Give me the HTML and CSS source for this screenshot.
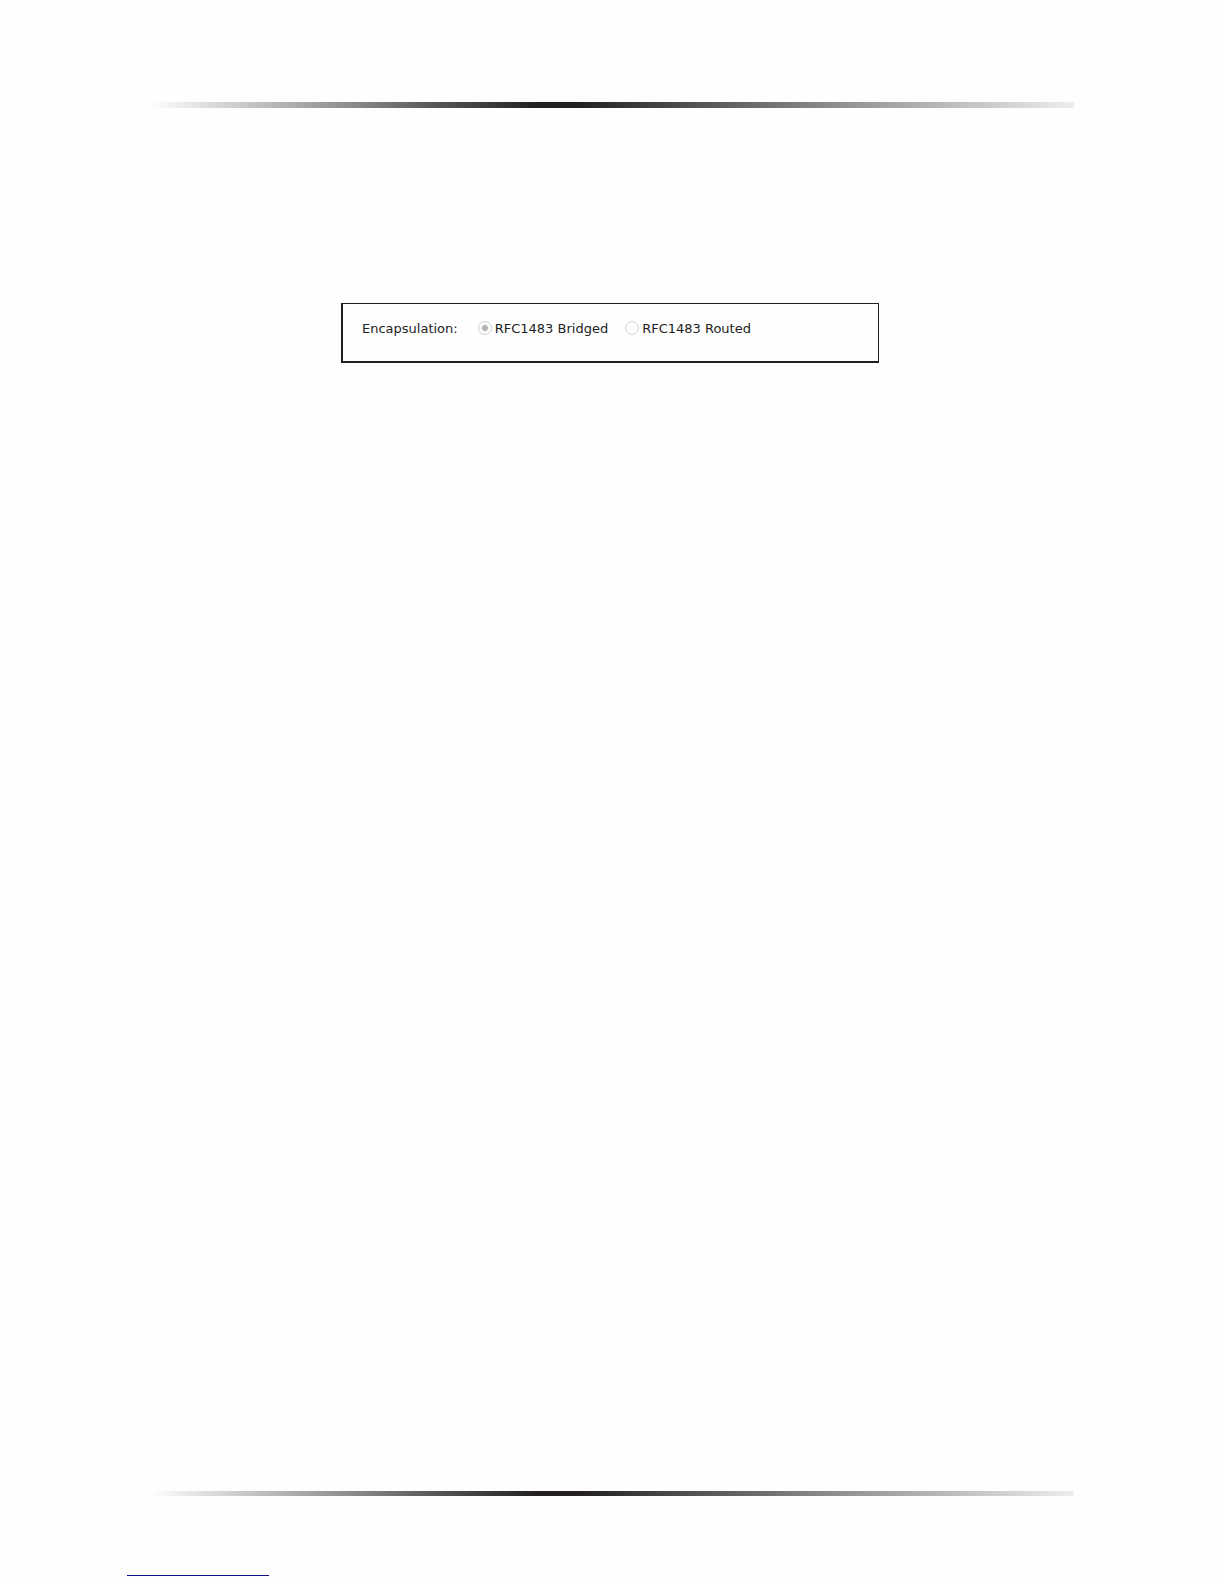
FILE: index.html
```
<!DOCTYPE html>
<html lang="en">
<head>
    <meta charset="UTF-8">
    <meta name="viewport" content="width=device-width, initial-scale=1.0">
    <title>Encapsulation</title>
    <link rel="stylesheet" href="styles.css">
</head>
<body>
    <div class="page">
        <hr class="rule">
        <form class="panel">
            <span class="caption" id="encapsulation">Encapsulation:</span>
            <div class="options" role="radiogroup" aria-labelledby="encapsulation">
                <label class="option">
                    <input type="radio" name="encapsulation" value="bridged" checked>
                    RFC1483 Bridged
                </label>
                <label class="option">
                    <input type="radio" name="encapsulation" value="routed">
                    RFC1483 Routed
                </label>
            </div>
        </form>
        <hr class="rule rule-bottom">
    </div>
    <hr class="footline">
</body>
</html>
```

FILE: styles.css
```
* {
    box-sizing: border-box;
}
body {
    margin: 0;
    min-height: 100vh;
    display: flex;
    flex-direction: column;
    padding: 102px 0 8px;
    background: #fefefe;
    color: #222;
    font-family: "DejaVu Sans", Verdana, sans-serif;
    font-size: 13px;
    line-height: 16px;
}
.page {
    flex: 1;
    display: flex;
    flex-direction: column;
    padding: 0 150px 0 152px;
}
.rule {
    width: 100%;
    height: 6px;
    margin: 0;
    border: none;
    background: linear-gradient(to right, #fefefe, #d8d8d8 7%, #848484 23%, #555 31%, #231f20 42%, #231f20 46%, #666 64%, #999 77%, #c8c8c8 90%, #eee);
}
.rule-bottom {
    height: 5px;
    margin-top: auto;
}
.panel {
    display: flex;
    align-items: flex-start;
    gap: 20px;
    min-height: 60px;
    margin: 195px 195px 0 189px;
    padding: 17px 19px;
    border: solid #231f20;
    border-width: 1px 1px 2px 2px;
}
.options {
    display: flex;
    flex-wrap: wrap;
    gap: 17px;
}
.option {
    display: flex;
    align-items: center;
    gap: 3px;
}
input[type="radio"] {
    appearance: none;
    width: 14px;
    height: 14px;
    margin: 0 0 2px;
    border: 1px solid #d2d2d2;
    border-radius: 50%;
    background: #fefefe;
}
input[type="radio"]:checked {
    background: radial-gradient(circle, #b0b0b0 2px, #fefefe 4px);
}
.footline {
    width: 142px;
    height: 1px;
    margin: 79px 0 0 127px;
    border: none;
    background: #10108a;
}
```
